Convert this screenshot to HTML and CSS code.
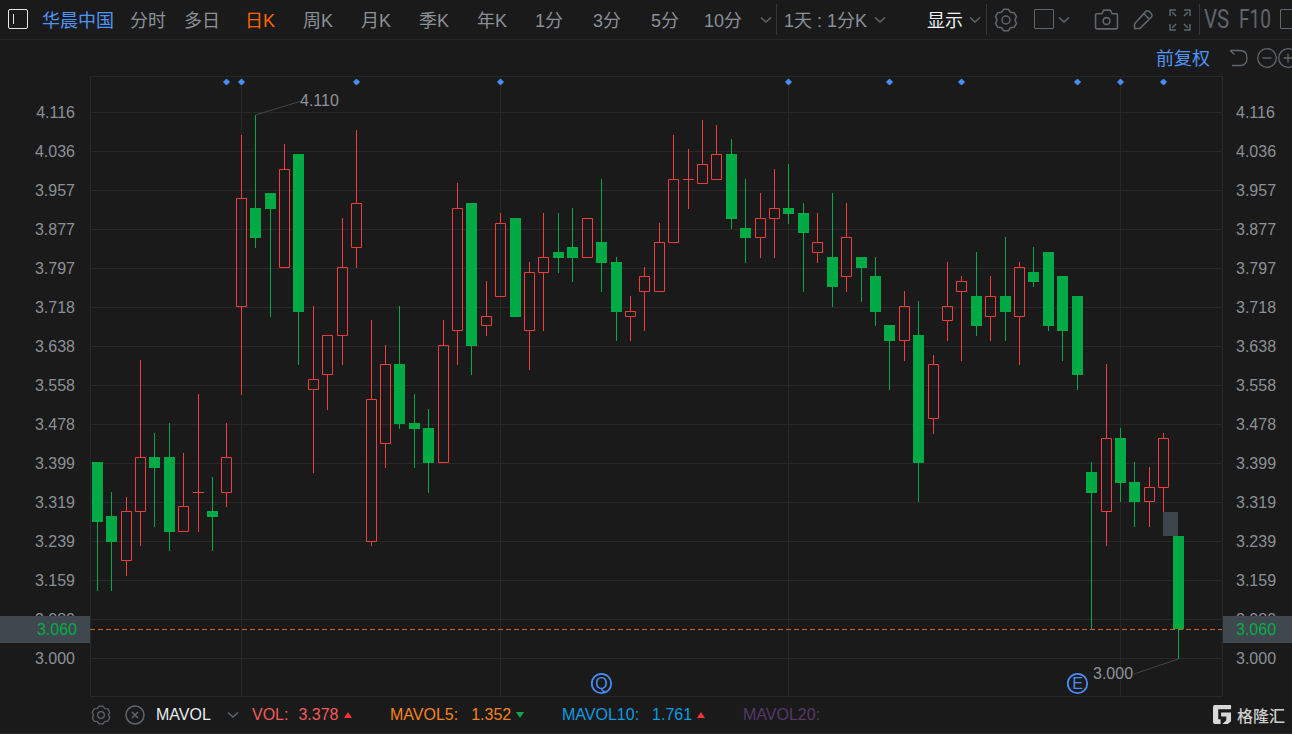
FILE: index.html
```html
<!DOCTYPE html>
<html lang="zh-CN">
<head>
<meta charset="utf-8">
<title>华晨中国 K线</title>
<link rel="stylesheet" href="styles.css">
</head>
<body>
<svg class="defs" width="0" height="0" aria-hidden="true">
  <symbol id="gear" viewBox="0 0 24 24"><polygon points="14.3,1.24 9.7,1.24 7.5,4.2 3.83,4.64 1.54,8.6 3,12 1.54,15.4 3.83,19.36 7.5,19.8 9.7,22.76 14.3,22.76 16.5,19.8 20.17,19.36 22.46,15.4 21,12 22.46,8.6 20.17,4.64 16.5,4.2"/><circle cx="12" cy="12" r="4"/></symbol>
  <symbol id="chev" viewBox="0 0 12 8"><path d="M1 1.5l5 4.5 5-4.5"/></symbol>
</svg>
<div class="app">
  <header class="toolbar">
    <span class="menu-box"><i></i></span>
    <span class="stock">华晨中国</span>
    <nav class="periods">
      <a class="p1">分时</a>
      <a class="p2">多日</a>
      <a class="p3 active">日K</a>
      <a class="p3">周K</a>
      <a class="p3">月K</a>
      <a class="p3">季K</a>
      <a class="p3">年K</a>
      <a class="p3">1分</a>
      <a class="p3">3分</a>
      <a class="p3">5分</a>
      <a class="p4">10分</a>
    </nav>
    <svg class="ico chev c1"><use href="#chev"/></svg>
    <span class="sep s1"></span>
    <span class="tb-item range">1天 : 1分K</span>
    <svg class="ico chev c2"><use href="#chev"/></svg>
    <span class="tb-item show">显示</span>
    <svg class="ico chev c3"><use href="#chev"/></svg>
    <span class="sep s2"></span>
    <svg class="ico gear-lg"><use href="#gear"/></svg>
    <span class="square"></span>
    <svg class="ico chev c4"><use href="#chev"/></svg>
    <svg class="ico camera" viewBox="0 0 24 20"><path d="M1.5 5.5q0-1 1-1h5l2-3.500h6l2 3.500h4q1 0 1 1v12.500q0 1-1 1h-19q-1 0-1-1z"/><circle cx="12" cy="11.500" r="3.300"/></svg>
    <svg class="ico pencil" viewBox="0 0 20 20"><path d="M1.500 18.500v-4.500l10.500-11.500q1.500-1.500 3.300-.2l2.300 2.200q1.300 1.500 0 3.200l-11 10.800zM10.500 4.500l5 5"/></svg>
    <svg class="ico expand" viewBox="0 0 22 22"><path d="M1 7v-6h6M15 1h6v6M21 15v6h-6M7 21h-6v-6M3 3l4 4M19 3l-4 4M19 19l-4-4M3 19l4-4"/></svg>
    <span class="sep s3"></span>
    <span class="vsf"><b>VS</b><b>F10</b></span>
    <span class="square sq2"></span>
  </header>

  <div class="subbar">
    <span class="adjust">前复权</span>
    <svg class="ico undo" viewBox="0 0 20 20"><path d="M1 2.500h10q7 0 7 7.500t-7 7.500h-8M1 2.500l4.500 4"/></svg>
    <svg class="ico zoomc" viewBox="0 0 20 20"><circle cx="10" cy="10" r="9.300"/><path d="M5.500 10h9"/></svg>
    <svg class="ico zoomc last" viewBox="0 0 20 20"><circle cx="10" cy="10" r="9.300"/><path d="M5.500 10h9M10 5.500v9"/></svg>
  </div>

  <main class="chart-row">
    <div class="axis axis-l">
      <span>4.116</span><span>4.036</span><span>3.957</span><span>3.877</span><span>3.797</span><span>3.718</span><span>3.638</span><span>3.558</span><span>3.478</span><span>3.399</span><span>3.319</span><span>3.239</span><span>3.159</span><span>3.080</span><span>3.000</span>
    </div>
    <svg class="plot" viewBox="90 76 1133 621">
      <path class="grid" d="M90 76.500H1223M90 112.500H1223M90 151.500H1223M90 190.500H1223M90 229.500H1223M90 268.500H1223M90 307.500H1223M90 346.500H1223M90 385.500H1223M90 424.500H1223M90 463.500H1223M90 502.500H1223M90 541.500H1223M90 580.500H1223M90 619.500H1223M90 658.500H1223M90 696.500H1223M90.500 76V697M241.500 76V697M500.500 76V697M788.500 76V697M1120.500 76V697M1222.500 76V697"/>
      <g class="dia">
        <path d="M226.500 79l3 3-3 3-3-3z"/><path d="M241.500 79l3 3-3 3-3-3z"/><path d="M356.500 79l3 3-3 3-3-3z"/><path d="M500.500 79l3 3-3 3-3-3z"/><path d="M788.500 79l3 3-3 3-3-3z"/><path d="M889.500 79l3 3-3 3-3-3z"/><path d="M961.500 79l3 3-3 3-3-3z"/><path d="M1077.500 79l3 3-3 3-3-3z"/><path d="M1120.500 79l3 3-3 3-3-3z"/><path d="M1163.500 79l3 3-3 3-3-3z"/>
      </g>
      <rect class="gap" x="1163" y="512" width="15" height="24"/>
      <path class="r" d="M126.500 497V511.500M121.500 511.500h10v49h-10zM126.500 560.500V576"/>
      <path class="r" d="M140.500 360V457.500M135.500 457.500h10v54h-10zM140.500 511.500V546"/>
      <path class="r" d="M183.500 453V506.500M178.500 506.500h10v25h-10z"/>
      <path class="r" d="M198.500 394V532M193 492.500H204"/>
      <path class="r" d="M226.500 423V457.500M221.500 457.500h10v35h-10zM226.500 492.500V507"/>
      <path class="r" d="M241.500 135V198.500M236.500 198.500h10v108h-10zM241.500 306.500V395"/>
      <path class="r" d="M284.500 144V169.500M279.500 169.500h10v98h-10z"/>
      <path class="r" d="M313.500 306V379.500M308.500 379.500h10v10h-10zM313.500 389.500V473"/>
      <path class="r" d="M322.500 335.500h10v39h-10zM327.500 374.500V410"/>
      <path class="r" d="M342.500 218V267.500M337.500 267.500h10v68h-10zM342.500 335.500V365"/>
      <path class="r" d="M356.500 130V203.500M351.500 203.500h10v44h-10zM356.500 247.500V268"/>
      <path class="r" d="M371.500 320V399.500M366.500 399.500h10v142h-10zM371.500 541.500V546"/>
      <path class="r" d="M385.500 345V364.500M380.500 364.500h10v79h-10zM385.500 443.500V468"/>
      <path class="r" d="M443.500 320V345.500M438.500 345.500h10v117h-10z"/>
      <path class="r" d="M457.500 183V208.500M452.500 208.500h10v122h-10zM457.500 330.500V365"/>
      <path class="r" d="M486.500 281V316.500M481.500 316.500h10v9h-10zM486.500 325.500V336"/>
      <path class="r" d="M500.500 213V223.500M495.500 223.500h10v73h-10z"/>
      <path class="r" d="M529.500 262V272.500M524.500 272.500h10v58h-10zM529.500 330.500V370"/>
      <path class="r" d="M543.500 213V257.500M538.500 257.500h10v15h-10zM543.500 272.500V331"/>
      <path class="r" d="M582.500 218.500h10v39h-10z"/>
      <path class="r" d="M630.500 296V311.500M625.500 311.500h10v5h-10zM630.500 316.500V341"/>
      <path class="r" d="M644.500 267V276.500M639.500 276.500h10v15h-10zM644.500 291.500V331"/>
      <path class="r" d="M659.500 223V242.500M654.500 242.500h10v49h-10z"/>
      <path class="r" d="M673.500 135V179.500M668.500 179.500h10v63h-10z"/>
      <path class="r" d="M688.500 149V209M683 179.500H694"/>
      <path class="r" d="M702.500 120V164.500M697.500 164.500h10v19h-10z"/>
      <path class="r" d="M716.500 125V154.500M711.500 154.500h10v25h-10z"/>
      <path class="r" d="M760.500 193V218.500M755.500 218.500h10v19h-10zM760.500 237.500V258"/>
      <path class="r" d="M774.500 169V208.500M769.500 208.500h10v10h-10zM774.500 218.500V258"/>
      <path class="r" d="M817.500 213V242.500M812.500 242.500h10v10h-10zM817.500 252.500V263"/>
      <path class="r" d="M846.500 203V237.500M841.500 237.500h10v39h-10zM846.500 276.500V292"/>
      <path class="r" d="M904.500 291V306.500M899.500 306.500h10v34h-10zM904.500 340.500V361"/>
      <path class="r" d="M933.500 355V364.500M928.500 364.500h10v54h-10zM933.500 418.500V434"/>
      <path class="r" d="M947.500 262V306.500M942.500 306.500h10v14h-10zM947.500 320.500V341"/>
      <path class="r" d="M961.500 276V281.500M956.500 281.500h10v10h-10zM961.500 291.500V361"/>
      <path class="r" d="M990.500 276V296.500M985.500 296.500h10v20h-10zM990.500 316.500V341"/>
      <path class="r" d="M1019.500 262V267.500M1014.500 267.500h10v49h-10zM1019.500 316.500V365"/>
      <path class="r" d="M1106.500 364V438.500M1101.500 438.500h10v73h-10zM1106.500 511.500V546"/>
      <path class="r" d="M1149.500 467V487.500M1144.500 487.500h10v14h-10zM1149.500 501.500V527"/>
      <path class="r" d="M1163.500 433V438.500M1158.500 438.500h10v49h-10zM1163.500 487.500V512"/>
      <path class="gw" d="M97.500 522V591M111.500 492V591M154.500 433V527M169.500 423V551M212.500 477V551M255.500 115V248M270.500 193V317M298.500 311V365M399.500 306V429M414.500 394V468M428.500 409V493M471.500 345V375M558.500 213V273M572.500 208V282M601.500 179V292M616.500 257V341M731.500 139V229M745.500 179V263M788.500 164V224M803.500 203V292M832.500 193V307M861.500 268V302M875.500 257V326M889.500 341V390M918.500 301V502M976.500 252V336M1005.500 237V341M1033.500 247V287M1048.500 326V331M1062.500 331V361M1077.500 375V390M1091.500 462V629M1120.500 428V502M1134.500 462V527M1178.500 629V659"/>
      <path class="g" d="M92 462h11v60h-11zM106 516h11v26h-11zM149 457h11v11h-11zM164 457h11v75h-11zM207 511h11v6h-11zM250 208h11v30h-11zM265 193h11v16h-11zM293 154h11v158h-11zM394 364h11v60h-11zM409 423h11v6h-11zM423 428h11v35h-11zM466 203h11v143h-11zM510 218h11v99h-11zM553 252h11v6h-11zM567 247h11v11h-11zM596 242h11v21h-11zM611 262h11v50h-11zM726 154h11v65h-11zM740 228h11v10h-11zM783 208h11v6h-11zM798 213h11v20h-11zM827 257h11v30h-11zM856 257h11v11h-11zM870 276h11v36h-11zM884 325h11v16h-11zM913 335h11v128h-11zM971 296h11v30h-11zM1000 296h11v16h-11zM1028 272h11v10h-11zM1043 252h11v74h-11zM1057 276h11v55h-11zM1072 296h11v79h-11zM1086 472h11v21h-11zM1115 438h11v45h-11zM1129 482h11v20h-11zM1173 536h11v93h-11z"/>
      <path class="last-price" d="M90 629.500H1222"/>
      <path class="leader" d="M255.500 115L300 101.500M1178.500 659L1134 674"/>
      <text class="peak" x="300" y="106">4.110</text>
      <text class="peak" x="1093" y="679">3.000</text>
      <g class="marker"><circle cx="601.500" cy="683.500" r="9.700"/><text x="601.500" y="689">Q</text></g>
      <g class="marker"><circle cx="1077.500" cy="683.500" r="9.700"/><text x="1077.500" y="689">E</text></g>
    </svg>
    <div class="axis axis-r">
      <span>4.116</span><span>4.036</span><span>3.957</span><span>3.877</span><span>3.797</span><span>3.718</span><span>3.638</span><span>3.558</span><span>3.478</span><span>3.399</span><span>3.319</span><span>3.239</span><span>3.159</span><span>3.080</span><span>3.000</span>
    </div>
    <div class="price-tag tag-l">3.060</div>
    <div class="price-tag tag-r">3.060</div>
  </main>

  <footer class="legend">
    <svg class="ico gear-sm"><use href="#gear"/></svg>
    <svg class="ico close" viewBox="0 0 20 20"><circle cx="10" cy="10" r="9"/><path d="M7 7l6 6M13 7l-6 6"/></svg>
    <span class="ind-name">MAVOL</span>
    <svg class="ico chev c5"><use href="#chev"/></svg>
    <span class="item vol"><em>VOL:</em><b>3.378</b><i class="up"></i></span>
    <span class="item ma5"><em>MAVOL5:</em><b>1.352</b><i class="down"></i></span>
    <span class="item ma10"><em>MAVOL10:</em><b>1.761</b><i class="up"></i></span>
    <span class="item ma20"><em>MAVOL20:</em></span>
    <span class="logo">
      <svg viewBox="0 0 20 20"><path d="M2 0H19V4.500H5.500V15H8V20H2Q0 20 0 18V2Q0 0 2 0zM8.500 8H19V17L15.500 20H10L14 16V12H8.500z"/></svg>
      <span>格隆汇</span>
    </span>
  </footer>
</div>
</body>
</html>
```
FILE: styles.css
```css
* { box-sizing: border-box; }
html, body { margin: 0; height: 100%; background: #1a1a1a; overflow: hidden; }
body { font-family: "Liberation Sans", "Noto Sans CJK SC", sans-serif; color: #8a9097; }
.defs { position: absolute; }
.app { width: 1292px; height: 734px; display: flex; flex-direction: column; overflow: hidden; }

.toolbar { height: 40px; flex: none; display: flex; align-items: center; border-bottom: 1px solid #262626; font-size: 18px; white-space: nowrap; padding-left: 8px; }
.menu-box { width: 20px; height: 20px; border: 1.5px solid #e4e6e8; border-radius: 2px; display: flex; align-items: center; padding-left: 3.500px; flex: none; margin-bottom: 2px; margin-right: 1px; }
.menu-box i { width: 1.500px; height: 10px; background: #e4e6e8; }
.stock { color: #4f94f7; margin-left: 13px; width: 72px; flex: none; margin-bottom: 2px; }
.periods { display: flex; margin-left: 16px; margin-bottom: 2px; }
.periods a { display: block; flex: none; }
.periods .p1 { width: 54px; }
.periods .p2 { width: 61px; }
.periods .p3 { width: 58px; }
.periods .p4 { width: 56px; margin-left: -5px; }
.periods .active { color: #ff6600; }

.ico { fill: none; stroke: #5f666d; stroke-width: 1.500; flex: none; }
.chev { width: 12px; height: 8px; stroke: #5f666d; }
.c1 { margin-left: 0; }
.sep { width: 1px; height: 31px; background: #33373b; flex: none; }
.s1 { margin-left: 4px; }
.tb-item { flex: none; margin-bottom: 2px; }
.range { margin-left: 7px; width: 83px; color: #8a9097; font-size: 18px; }
.c2 { margin-left: 7px; }
.show { color: #eef2f6; margin-left: 41px; width: 36px; }
.c3 { margin-left: 6px; }
.s2 { margin-left: 5px; }
.gear-lg { width: 24px; height: 24px; margin-left: 7px; }
.square { width: 20px; height: 20px; border: 1.5px solid #5f666d; border-radius: 1px; margin-left: 16px; flex: none; margin-bottom: 2px; }
.c4 { margin-left: 4px; }
.camera { width: 25px; height: 21px; margin-left: 24px; }
.pencil { width: 21px; height: 21px; margin-left: 14px; }
.expand { width: 22px; height: 22px; margin-left: 15px; }
.s3 { margin-left: 8px; }
.vsf { display: flex; gap: 9px; margin-left: 4px; width: 66px; flex: none; font-family: Roboto, sans-serif; font-size: 25px; color: #5f666d; }
.vsf b { font-weight: 400; display: inline-block; transform: scaleX(.82); transform-origin: left center; width: 26px; }
.vsf b:last-child { width: 32px; transform: scaleX(.76); }
.sq2 { margin-left: 10px; }

.subbar { height: 36px; flex: none; display: flex; align-items: center; justify-content: flex-end; overflow: hidden; }
.adjust { color: #4f94f7; font-size: 18px; margin-right: 19px; margin-bottom: 2px; }
.undo { width: 20px; height: 20px; }
.zoomc { width: 20px; height: 20px; margin-left: 8px; }
.zoomc.last { margin-left: 1px; margin-right: -6px; }
.subbar .ico { stroke-width: 1.300; }

.chart-row { height: 621px; flex: none; position: relative; display: flex; }
.plot { width: 1133px; height: 621px; display: block; flex: none; }
.axis { flex: none; display: flex; flex-direction: column; padding-top: 17px; font-size: 16px; color: #8b9096; }
.axis span { height: 39px; line-height: 39px; }
.axis-l { width: 90px; text-align: right; padding-right: 15px; }
.axis-r { width: 69px; padding-left: 13px; }

.grid { stroke: #282828; stroke-width: 1; fill: none; }
.dia path { fill: #4a8ff5; stroke: #4a8ff5; stroke-width: 1; stroke-linejoin: round; }
.gap { fill: #3d444c; }
.r { stroke: #f23d3d; stroke-width: 1; fill: none; }
.g { fill: #00aa44; }
.gw { stroke: #00aa44; stroke-width: 1; fill: none; }
.last-price { stroke: #c8641e; stroke-width: 1; stroke-dasharray: 5 3; fill: none; }
.leader { stroke: #444; stroke-width: 1; fill: none; }
.peak { font-family: "Liberation Sans", sans-serif; font-size: 16px; fill: #8f9398; }
.marker circle { fill: #1a1a1a; stroke: #4a8df0; stroke-width: 1.800; }
.marker text { font-family: "Liberation Sans", sans-serif; font-size: 16px; fill: #4a8df0; text-anchor: middle; }

.price-tag { position: absolute; top: 540px; height: 27px; line-height: 27px; background: #3f484f; color: #06ad47; font-size: 16px; }
.tag-l { left: 0; width: 90px; text-align: right; padding-right: 13px; }
.tag-r { right: 0; width: 69px; padding-left: 13px; }

.legend { height: 37px; flex: none; display: flex; align-items: center; border-bottom: 1px solid #262626; font-size: 16px; position: relative; white-space: nowrap; padding-left: 91px; }
.gear-sm { width: 20px; height: 20px; }
.close { width: 20px; height: 20px; margin-left: 14px; }
.ind-name { color: #e8edf2; margin-left: 11px; width: 56px; flex: none; }
.c5 { margin-left: 15px; }
.item { display: flex; align-items: center; flex: none; }
.item em { font-style: normal; }
.item b { font-weight: 400; }
.up, .down { width: 0; height: 0; border-left: 4.500px solid transparent; border-right: 4.500px solid transparent; margin-left: 5px; }
.up { border-bottom: 6px solid #ff3333; }
.down { border-top: 6px solid #06ad47; }
.vol { color: #f25b5b; margin-left: 13px; width: 138px; }
.vol b { margin-left: 10px; }
.ma5 { color: #f5821f; width: 172px; }
.ma5 b { margin-left: 13px; }
.ma10 { color: #0f9be0; width: 181px; }
.ma10 b { margin-left: 13px; }
.ma20 { color: #56386a; }
.logo { position: absolute; right: 7px; top: 8px; display: flex; align-items: center; gap: 5px; color: #cfcfcf; font-size: 16px; font-weight: 500; height: 19px; }
.logo svg { width: 19px; height: 19px; fill: #d8d8d8; }
```
